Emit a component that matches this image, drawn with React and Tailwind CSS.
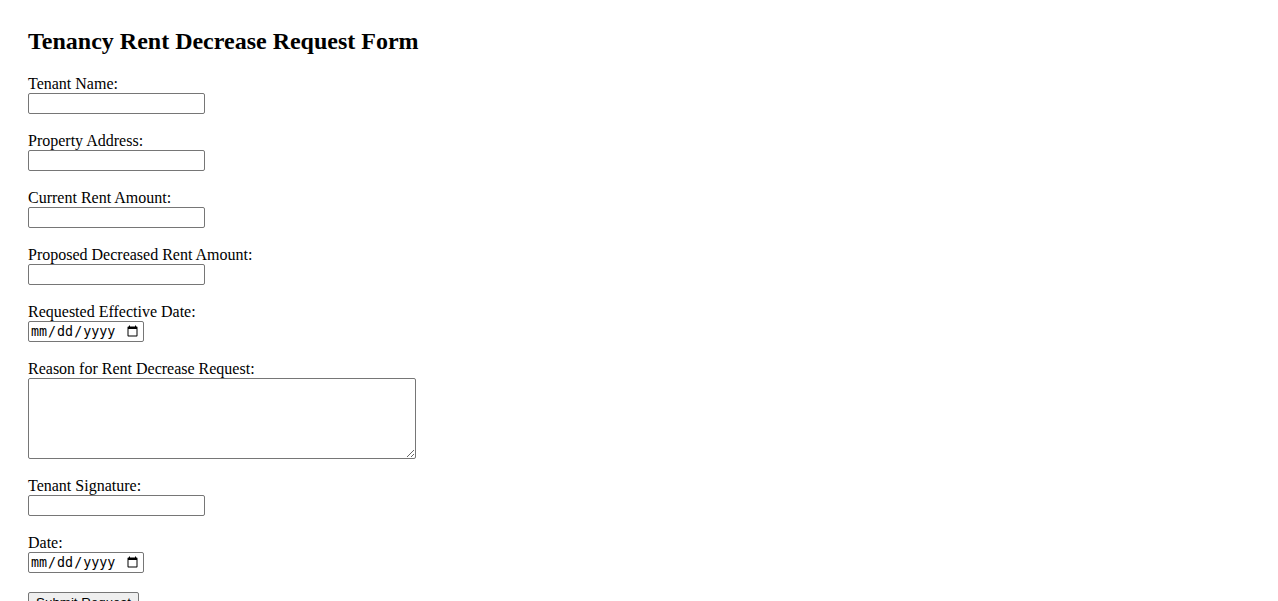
import React from 'react';

const fields = [
  { label: 'Tenant Name:', type: 'text' },
  { label: 'Property Address:', type: 'text' },
  { label: 'Current Rent Amount:', type: 'text' },
  { label: 'Proposed Decreased Rent Amount:', type: 'text' },
  { label: 'Requested Effective Date:', type: 'date' },
  { label: 'Reason for Rent Decrease Request:', type: 'textarea' },
  { label: 'Tenant Signature:', type: 'text' },
  { label: 'Date:', type: 'date' },
];

const Field = ({ label, type }) => {
  let control;
  if (type === 'textarea') {
    control = (
      <textarea className="block w-[388px] h-[81px] border border-[#767676] rounded-[2px] bg-white" />
    );
  } else if (type === 'date') {
    control = (
      <input
        type="date"
        className="block w-[116px] h-[21px] border border-[#767676] rounded-[2px] bg-white pl-[1px] pr-[2px] text-[13.33px] font-['DejaVu_Sans_Mono',monospace] text-black"
      />
    );
  } else {
    control = (
      <input
        type="text"
        className="block w-[177px] h-[21px] border border-[#767676] rounded-[2px] bg-white px-[2px] text-[13.33px]"
      />
    );
  }

  return (
    <div className="mb-[17px]">
      <label className="block leading-[19px]">{label}</label>
      {control}
    </div>
  );
};

export default function App() {
  return (
    <div className="min-h-screen bg-white text-black font-['Liberation_Serif',serif] text-[16px] px-[28px] pt-[28px]">
      <h2 className="text-[24px] font-bold leading-[27.6px] mb-[18.9px]">
        Tenancy Rent Decrease Request Form
      </h2>
      <form onSubmit={(e) => e.preventDefault()}>
        {fields.map((f) => (
          <Field key={f.label} label={f.label} type={f.type} />
        ))}
        <button
          type="submit"
          className="mt-[2px] w-[111px] h-[21px] bg-[#efefef] border border-[#767676] rounded-[2px] px-[6px] text-[13.33px] font-['Liberation_Sans',sans-serif] text-black"
        >
          Submit Request
        </button>
      </form>
    </div>
  );
}
